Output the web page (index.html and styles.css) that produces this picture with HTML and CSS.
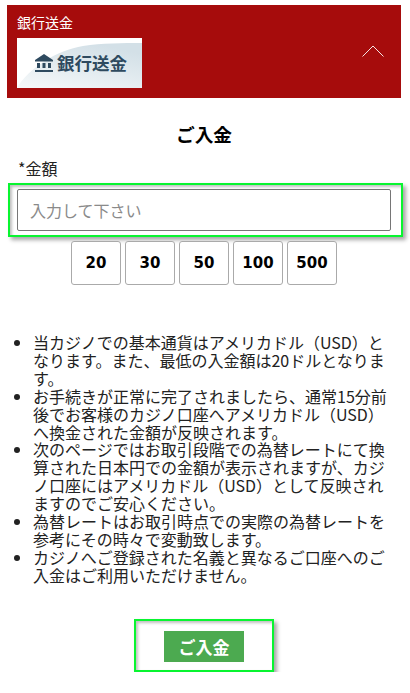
FILE: index.html
```html
<!doctype html>
<html lang="ja">
  <head>
    <meta charset="UTF-8" />
    <meta name="viewport" content="width=device-width, initial-scale=1.0" />
    <title>ご入金</title>
    <link rel="stylesheet" href="styles.css">
  </head>
  <body>
    <div class="container">
      <div class="method-bar">
        <div class="method-info">
          <div class="method-name">銀行送金</div>
          <div class="method-logo">
            <svg class="logo-swoosh" width="125" height="50" viewBox="0 0 125 50">
              <defs>
                <linearGradient id="swoosh" x1="0" y1="1" x2="0.6" y2="0">
                  <stop offset="0" stop-color="#f6f9fa" />
                  <stop offset="1" stop-color="#d3e0e7" />
                </linearGradient>
              </defs>
              <path d="M0 50 C12 30 40 12 66 8 C85 5 105 5 125 5 V50 Z" fill="url(#swoosh)" />
            </svg>
            <svg class="bank-icon" width="20" height="20" viewBox="0 0 20 20">
              <path d="M10 1 L19 7 V8.500 H1 V7 Z M3 10 H6 V15 H3 Z M8.500 10 H11.500 V15 H8.500 Z M14 10 H17 V15 H14 Z M1 17 H19 V19 H1 Z" fill="#2e4a5f" />
            </svg>
            <span class="logo-text">銀行送金</span>
          </div>
        </div>
        <svg class="chevron" width="22" height="12" viewBox="0 0 22 12">
          <path d="M0.500 11.500 L11 1 L21.500 11.500" fill="none" stroke="#f4e3e3" stroke-width="1" />
        </svg>
      </div>

      <h1>ご入金</h1>

      <form>
        <label for="amount">*金額</label>
        <div class="highlight input-wrap">
          <input type="text" id="amount" placeholder="入力して下さい" />
        </div>
        <div class="amounts">
          <button type="button">20</button>
          <button type="button">30</button>
          <button type="button">50</button>
          <button type="button">100</button>
          <button type="button">500</button>
        </div>

        <ul class="notes">
          <li>当カジノでの基本通貨はアメリカドル（USD）となります。また、最低の入金額は20ドルとなります。</li>
          <li>お手続きが正常に完了されましたら、通常15分前後でお客様のカジノ口座へアメリカドル（USD）へ換金された金額が反映されます。</li>
          <li>次のページではお取引段階での為替レートにて換算された日本円での金額が表示されますが、カジノ口座にはアメリカドル（USD）として反映されますのでご安心ください。</li>
          <li>為替レートはお取引時点での実際の為替レートを参考にその時々で変動致します。</li>
          <li>カジノへご登録された名義と異なるご口座へのご入金はご利用いただけません。</li>
        </ul>

        <div class="submit-row">
          <div class="highlight submit-wrap">
            <button type="submit" class="submit">ご入金</button>
          </div>
        </div>
      </form>
    </div>
  </body>
</html>
```

FILE: styles.css
```css
body {
  font-family: "Noto Sans CJK JP", "Liberation Sans", sans-serif;
  margin: 0;
  background-color: #ffffff;
  color: #222222;
}
.container {
  padding: 5px 9px 0 7px;
}
.method-bar {
  display: flex;
  align-items: center;
  justify-content: space-between;
  height: 93px;
  padding: 0 17px 0 10px;
  box-sizing: border-box;
  background-color: #a60c0c;
}
.method-name {
  color: #ffffff;
  font-size: 14px;
  line-height: 20px;
  margin: -4px 0 6px;
}
.method-logo {
  position: relative;
  display: flex;
  align-items: center;
  gap: 3px;
  width: 125px;
  height: 50px;
  padding-left: 17px;
  box-sizing: border-box;
  background-color: #ffffff;
}
.logo-swoosh {
  position: absolute;
  left: 0;
  top: 0;
}
.bank-icon {
  position: relative;
}
.logo-text {
  position: relative;
  color: #2e4a5f;
  font-size: 17.500px;
  font-weight: bold;
  line-height: 20px;
  white-space: nowrap;
}
.chevron {
  margin-top: -2px;
}
h1 {
  margin: 22px 0 0;
  font-size: 18.720px;
  line-height: 28px;
  text-align: center;
  color: #000000;
}
label {
  display: block;
  margin: 10px 0 0 11px;
  font-size: 16px;
  line-height: 20px;
}
.highlight {
  border: 2px solid #08f530;
  box-shadow: 3px 3px 4px rgba(0, 0, 0, 0.35), inset 2px 2px 3px rgba(0, 0, 0, 0.25);
  box-sizing: border-box;
}
.input-wrap {
  margin: 5px -2px 0 1px;
  padding: 4px 10px 4px 7px;
  height: 54px;
}
input {
  display: block;
  width: 100%;
  height: 42px;
  padding: 0 12px;
  font-family: inherit;
  font-size: 16px;
  color: #333333;
  border: 1px solid #767676;
  border-radius: 2px;
  box-sizing: border-box;
}
input::placeholder {
  color: #8a8a8a;
}
.amounts {
  display: flex;
  justify-content: center;
  gap: 4px;
  margin-top: 4px;
}
.amounts button {
  width: 50px;
  height: 44px;
  padding: 0;
  font-family: "DejaVu Sans", sans-serif;
  font-size: 15px;
  font-weight: bold;
  color: #000000;
  background-color: #ffffff;
  border: 1px solid #aaaaaa;
  border-radius: 3px;
}
.notes {
  margin: 49px 0 0;
  padding: 0 10px 0 26px;
  font-size: 16px;
  line-height: 17.900px;
}
.submit-row {
  display: flex;
  justify-content: center;
  margin-top: 34px;
}
.submit-wrap {
  display: flex;
  align-items: center;
  justify-content: center;
  width: 140px;
  height: 53px;
  padding-top: 2px;
}
.submit {
  width: 80px;
  height: 31px;
  padding: 0;
  font-family: inherit;
  font-size: 17px;
  font-weight: bold;
  color: #ffffff;
  background-color: #4caa50;
  border: none;
}
```
